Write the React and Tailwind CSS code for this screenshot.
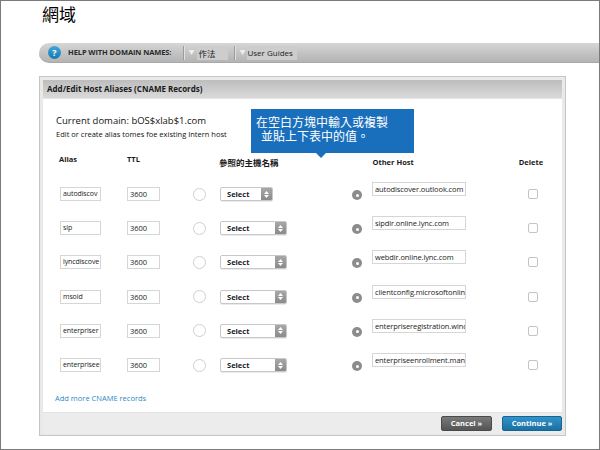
import React from "react";

const rows = [
  { alias: "autodiscov", host: "autodiscover.outlook.com", narrow: true },
  { alias: "sip", host: "sipdir.online.lync.com" },
  { alias: "lyncdiscove", host: "webdir.online.lync.com" },
  { alias: "msoid", host: "clientconfig.microsoftonline" },
  { alias: "enterpriser", host: "enterpriseregistration.windows" },
  { alias: "enterprisee", host: "enterpriseenrollment.manage" },
];

function Select({ narrow }) {
  return (
    <div
      className={`ml-[14px] flex h-[14px] items-stretch overflow-hidden rounded-[2px] border border-[#c8c8c8] bg-white shadow-[0_1px_0_rgba(0,0,0,0.08)] ${
        narrow ? "w-[53px]" : "w-[67px]"
      }`}
    >
      <span className="flex-1 pl-[6px] text-[7.5px] font-bold leading-[12px] text-[#222]">
        Select
      </span>
      <span className="flex w-[11px] flex-col items-center justify-center gap-[1px] bg-gradient-to-b from-[#a8a8a8] to-[#8a8a8a]">
        <svg width="5" height="3" viewBox="0 0 5 3">
          <path d="M0 3 L2.5 0 L5 3 Z" fill="#fff" />
        </svg>
        <svg width="5" height="3" viewBox="0 0 5 3">
          <path d="M0 0 L2.5 3 L5 0 Z" fill="#fff" />
        </svg>
      </span>
    </div>
  );
}

function Row({ r }) {
  return (
    <div className="flex h-[34.2px] items-center">
      <div className="ml-[17px] h-[14px] w-[41px] overflow-hidden whitespace-nowrap border border-[#d6d6d6] bg-white pl-[2px] text-[7px] leading-[12px] tracking-[-0.1px] text-[#222]">
        {r.alias}
      </div>
      <div className="ml-[26px] h-[14px] w-[33px] border border-[#d6d6d6] bg-white pl-[2px] text-[7.5px] leading-[12px] text-[#222]">
        3600
      </div>
      <div className="ml-[33px] h-[13px] w-[13px] rounded-full border border-[#cfcfcf] bg-white" />
      <Select narrow={r.narrow} />
      <div className={`${r.narrow ? "ml-[79px]" : "ml-[65px]"} mt-[2px] flex h-[10px] w-[10px] items-center justify-center rounded-full bg-[#8c8c8c]`}>
        <div className="h-[3px] w-[3px] rounded-full bg-white" />
      </div>
      <div className="mb-[10px] ml-[10px] h-[14px] w-[94px] overflow-hidden whitespace-nowrap border border-[#d6d6d6] bg-white pl-[2px] text-[7.5px] leading-[12px] tracking-[-0.1px] text-[#222]">
        {r.host}
      </div>
      <div className="ml-[62px] h-[10px] w-[10px] rounded-[2px] border border-[#c4c4c4] bg-white" />
    </div>
  );
}

export default function App() {
  return (
    <div
      className="relative h-[450px] w-[600px] overflow-hidden border border-[#7a7a7a] bg-white"
      style={{ fontFamily: '"Open Sans", "Noto Sans CJK TC", sans-serif' }}
    >
      {/* title */}
      <div
        className="ml-[41px] mt-[2px] text-[17px] leading-[22px] text-black"
        style={{ fontFamily: '"Noto Sans CJK TC", sans-serif' }}
      >
        網域
      </div>

      {/* help bar */}
      <div className="ml-[38px] mt-[18px] flex h-[20px] items-center rounded-l-full border-b border-[#a9a9a9] bg-gradient-to-b from-[#d6d6d6] via-[#c4c4c4] to-[#b4b4b4]">
        <div className="ml-[9px] flex h-[13px] w-[13px] items-center justify-center rounded-full bg-gradient-to-b from-[#3fa6dc] to-[#1577b3] text-[9px] font-bold leading-none text-white">
          ?
        </div>
        <span className="ml-[7px] text-[7.5px] font-bold tracking-[-0.1px] text-[#2a2a2a]">
          HELP WITH DOMAIN NAMES:
        </span>
        <div className="ml-[12px] h-[14px] w-[2px] border-l border-r border-l-[#9a9a9a] border-r-[#e0e0e0]" />
        <span className="ml-[3px] text-[6px] text-[#eee]">▼</span>
        <span
          className="ml-[3px] h-[14px] w-[31px] bg-[#cdcdcd] pl-[1px] text-[8.5px] leading-[14px] text-[#222]"
          style={{ fontFamily: '"Noto Sans CJK TC", sans-serif' }}
        >
          作法
        </span>
        <div className="ml-[6px] h-[14px] w-[2px] border-l border-r border-l-[#9a9a9a] border-r-[#e0e0e0]" />
        <span className="ml-[3px] text-[6px] text-[#eee]">▼</span>
        <span className="ml-[2px] h-[14px] w-[50px] bg-[#cdcdcd] text-[8px] leading-[14px] text-[#222]">
          User Guides
        </span>
      </div>

      {/* dialog */}
      <div className="ml-[38px] mt-[13px] h-[360px] w-[527px] border border-[#c6c6c6] bg-[#e9e9e9] p-[3px]">
        <div className="flex h-[19px] items-center border-b border-[#e6e6e6] bg-gradient-to-b from-[#bdbdbd] to-[#dadada] pl-[4px] text-[8px] font-bold text-[#1a1a1a]">
          Add/Edit Host Aliases (CNAME Records)
        </div>
        <div className="h-[313px] bg-white">
          <div className="pl-[13px] pt-[15px] text-[9.5px] leading-[14px] text-[#111]">
            Current domain: bOS$xlab$1.com
          </div>
          <div className="mt-[1px] pl-[13px] text-[7.5px] leading-[10px] text-[#111]">
            Edit or create alias tomes foe existing Intern host
          </div>
          <div className="relative mt-[13px] flex h-[25px] text-[7.5px] font-bold text-[#1a1a1a]">
            <span className="ml-[16px] mt-[2px] leading-[10px]">Alias</span>
            <span className="ml-[50px] mt-[2px] leading-[10px]">TTL</span>
            <span
              className="ml-[79px] mt-[5px] text-[8.5px] leading-[10px]"
              style={{ fontFamily: '"Noto Sans CJK TC", sans-serif' }}
            >
              參照的主機名稱
            </span>
            <span className="ml-[94px] mt-[5px] leading-[10px]">Other Host</span>
            <span className="ml-[105px] mt-[5px] leading-[10px]">Delete</span>
          </div>
          {rows.map((r, i) => (
            <Row key={i} r={r} />
          ))}
          <div className="mt-[11px] pl-[12px] text-[7.5px] leading-[10px] text-[#2a8bbf]">
            Add more CNAME records
          </div>
        </div>
        <div className="flex h-[22px] items-center justify-end gap-[10px] border-t border-[#e2e2e2] bg-[#ececec] pr-[0px]">
          <div className="flex h-[15px] w-[51px] items-center justify-center rounded-[2px] border border-[#4a4a4a] bg-gradient-to-b from-[#7a7a7a] to-[#555] text-[7.5px] font-bold text-white">
            Cancel »
          </div>
          <div className="flex h-[15px] w-[60px] items-center justify-center rounded-[2px] border border-[#17648f] bg-gradient-to-b from-[#3193c9] to-[#1a70a3] text-[7.5px] font-bold text-white">
            Continue »
          </div>
        </div>
      </div>

      {/* tooltip */}
      <div
        className="absolute left-[250px] top-[108px] h-[44px] w-[163px] bg-[#1a6fbd] pl-[5px] pt-[6px] text-[12px] leading-[14px] text-white"
        style={{ fontFamily: '"Noto Sans CJK TC", sans-serif' }}
      >
        <div>在空白方塊中輸入或複製</div>
        <div className="pl-[5px]">並貼上下表中的值。</div>
        <div className="absolute left-[65px] top-[44px] h-0 w-0 border-l-[5px] border-r-[5px] border-t-[5px] border-l-transparent border-r-transparent border-t-[#1a6fbd]" />
      </div>
    </div>
  );
}
